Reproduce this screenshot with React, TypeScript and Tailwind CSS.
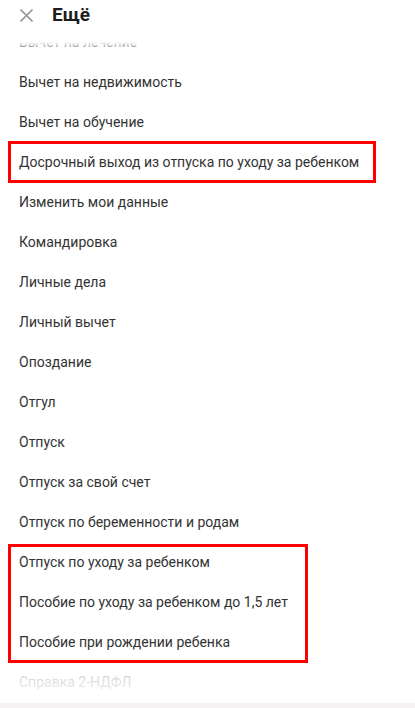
const items = [
  "Вычет на лечение",
  "Вычет на недвижимость",
  "Вычет на обучение",
  "Досрочный выход из отпуска по уходу за ребенком",
  "Изменить мои данные",
  "Командировка",
  "Личные дела",
  "Личный вычет",
  "Опоздание",
  "Отгул",
  "Отпуск",
  "Отпуск за свой счет",
  "Отпуск по беременности и родам",
  "Отпуск по уходу за ребенком",
  "Пособие по уходу за ребенком до 1,5 лет",
  "Пособие при рождении ребенка",
  "Справка 2-НДФЛ",
];

export default function App() {
  return (
    <div className="w-[415px] h-[708px] bg-white flex flex-col overflow-hidden font-['Roboto','Noto_Sans',sans-serif]">
      {/* шапка */}
      <div className="h-[42px] shrink-0 flex items-start pt-[5px] pl-[20px] gap-[19px] bg-white relative z-10">
        <svg className="w-[13px] h-[13px] mt-[4px]" viewBox="0 0 13 13" fill="none" stroke="#9a9a9a" strokeWidth="1.6">
          <path d="M0.5 0.5 L12.5 12.5 M12.5 0.5 L0.5 12.5" />
        </svg>
        <h1 className="text-[19px] leading-[20px] font-bold text-[#1c1c1c]">Ещё</h1>
      </div>

      {/* список */}
      <div className="relative flex-1 overflow-hidden">
        <div className="mt-[-20px]">
          {items.map((item) => (
            <div key={item} className="h-[40px] flex items-center pl-[19px] text-[14px] text-[#333333]">
              {item}
            </div>
          ))}
        </div>

        <div className="absolute left-0 right-0 top-0 h-[10px] bg-gradient-to-b from-white to-white/0" />
        <div className="absolute left-0 right-0 bottom-0 h-[40px] bg-gradient-to-t from-white via-white/85 to-white/70" />

        {/* выделение */}
        <div className="absolute left-[8px] top-[99px] w-[368px] h-[42px] border-[3px] border-[#ff0000]" />
        <div className="absolute left-[8px] top-[502px] w-[300px] h-[119px] border-[3px] border-[#ff0000]" />
      </div>

      <div className="h-[5px] shrink-0 bg-[#f6f1f2]" />
    </div>
  );
}
